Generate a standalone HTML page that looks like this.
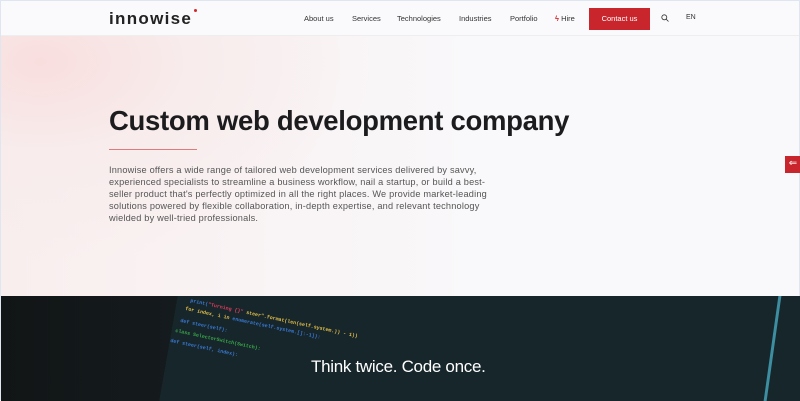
<!DOCTYPE html>
<html><head><style>
*{margin:0;padding:0;box-sizing:border-box}
body{width:800px;height:400px;overflow:hidden;font-family:"Liberation Sans",sans-serif;background:#fafafc;position:relative;border:1px solid #dfe6f2}
.hdr{position:absolute;left:0;top:0;width:798px;height:35px;background:#fafafc;border-bottom:1px solid #eee}
.logo{position:absolute;left:108px;top:8px;font-size:17px;font-weight:bold;letter-spacing:1.3px;color:#222}
.logo i{position:absolute;right:-5px;top:0px;width:3px;height:3px;background:#d3262c;border-radius:50%}
.nav{position:absolute;top:13px;font-size:7.5px;color:#333}
.btn{position:absolute;left:588px;top:7px;width:61px;height:22px;background:#c8262c;color:#fff;font-size:7.5px;text-align:center;line-height:22px}
.hero{position:absolute;left:0;top:35px;width:798px;height:260px;background:radial-gradient(ellipse 330px 200px at 5% 10%,#f9dede 0%,#f8ecec 45%,rgba(250,250,252,0) 100%),linear-gradient(90deg,#f9eeee,#f9f8fa 60%,#f9f9fb)}
h1{position:absolute;left:108px;top:104px;font-size:27.5px;font-weight:bold;color:#1c1c1e;letter-spacing:-0.3px;white-space:nowrap}
.line{position:absolute;left:108px;top:148px;width:88px;height:1px;background:#e2797a}
p{position:absolute;left:108px;top:163px;width:385px;font-size:9.2px;line-height:12px;color:#555;letter-spacing:0.2px}
.arrow{position:absolute;left:784px;top:155px;width:16px;height:17px;background:#c8262c;color:#fff;font-size:10px;line-height:16px;text-align:center}
.dark{position:absolute;left:0;top:295px;width:800px;height:105px;background:linear-gradient(90deg,#111516 0%,#161d20 30%,#172328 60%,#14282e 100%)}
.scr{position:absolute;left:150px;top:0;width:650px;height:105px;background:linear-gradient(100deg,transparent 0 4%,#16262b 4% 100%)}
.code{position:absolute;font-family:"Liberation Mono",monospace;font-size:5px;font-weight:bold;transform:rotate(12deg);transform-origin:left top}
.t{position:absolute;left:310px;top:356px;font-size:17px;color:#fff;letter-spacing:-0.3px}
</style></head><body>
<div class="hdr">
<div class="logo">innowise<i></i></div>
<span class="nav" style="left:303px">About us</span>
<span class="nav" style="left:351px">Services</span>
<span class="nav" style="left:396px">Technologies</span>
<span class="nav" style="left:458px">Industries</span>
<span class="nav" style="left:509px">Portfolio</span>
<span class="nav" style="left:554px"><b style="color:#d3262c">ϟ</b> Hire</span>
<div class="btn">Contact us</div>
<svg style="position:absolute;left:660px;top:13px" width="8" height="8" viewBox="0 0 8 8"><circle cx="3.3" cy="3.3" r="2.5" fill="none" stroke="#333" stroke-width="0.8"/><path d="M5.2 5.2L7.5 7.5" stroke="#333" stroke-width="0.8"/></svg>
<span class="nav" style="left:685px;font-size:7px">EN</span>
</div>
<div class="hero"></div>
<h1>Custom web development company</h1>
<div class="line"></div>
<p>Innowise offers a wide range of tailored web development services delivered by savvy, experienced specialists to streamline a business workflow, nail a startup, or build a best-seller product that's perfectly optimized in all the right places. We provide market-leading solutions powered by flexible collaboration, in-depth expertise, and relevant technology wielded by well-tried professionals.</p>
<div class="arrow">⇐</div>
<div class="dark">
<div class="scr"></div>
<div class="code" style="left:190px;top:2px;color:#3b7bd8">print(<span style="color:#e23c5a">"Turning {}"</span> <span style="color:#e7c04a">steer".format(len(self.system.)) - 1))</span></div>
<div class="code" style="left:185px;top:10px;color:#e7c04a">for index, i in <span style="color:#3b7bd8">enumerate(self.system.[]:-1]):</span></div>
<div class="code" style="left:180px;top:22px;color:#3b7bd8">def steer(self):</div>
<div class="code" style="left:175px;top:32px;color:#3ba84a">class SelectorSwitch(Switch):</div>
<div class="code" style="left:170px;top:42px;color:#3b7bd8">def steer(self, index):</div>
<div style="position:absolute;left:770px;top:0;width:3px;height:105px;background:#3c8ea0;transform:skewX(-8deg)"></div>
</div>
<div class="t">Think twice. Code once.</div>
</body></html>
